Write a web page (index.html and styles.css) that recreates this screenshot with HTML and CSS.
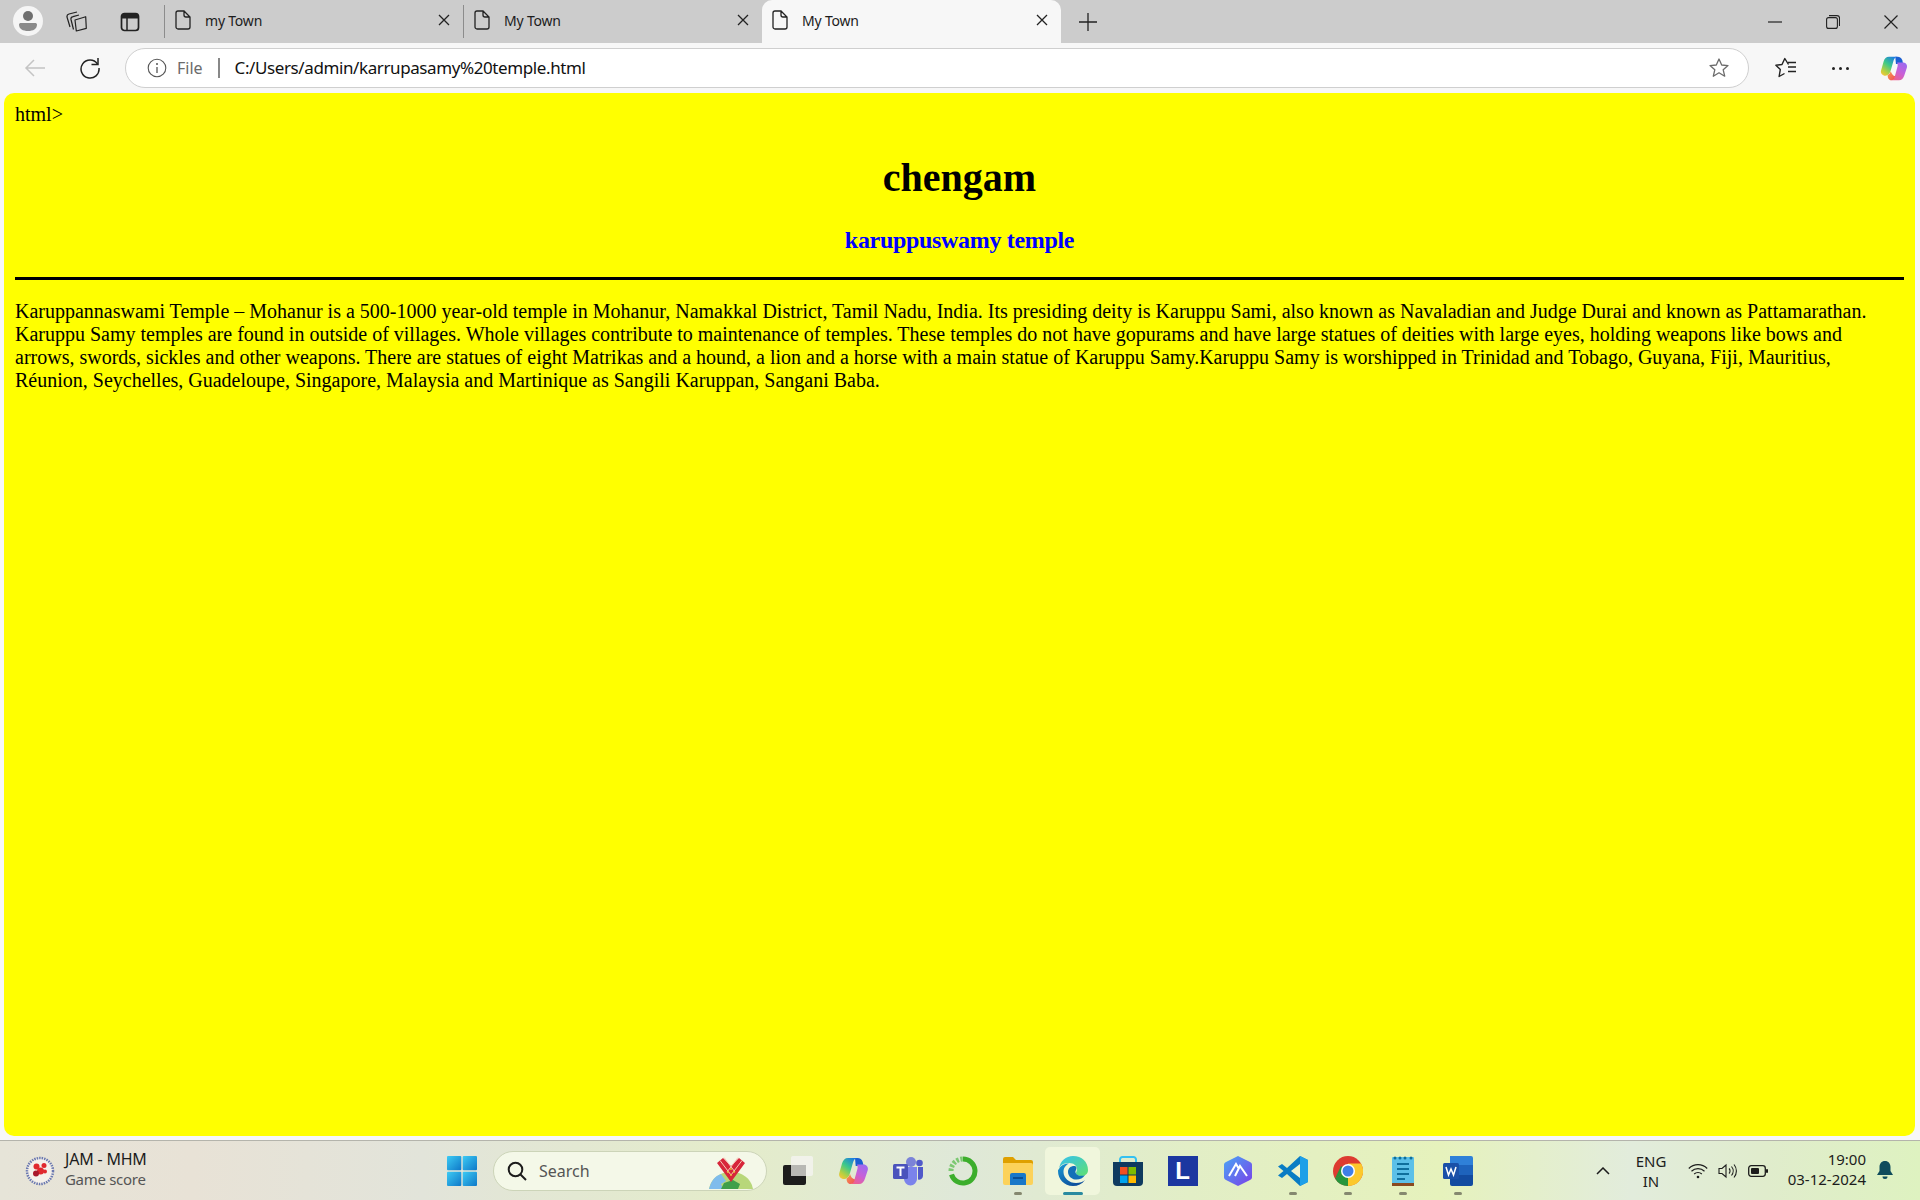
FILE: index.html
```html
<!DOCTYPE html>
<html lang="en">
<head>
  <meta charset="UTF-8">
  <title>My Town</title>
  <link rel="stylesheet" href="styles.css">
</head>
<body>

<svg class="sprite" width="0" height="0">
  <defs>
    <linearGradient id="copA" x1="0.8" y1="0" x2="0.15" y2="1">
      <stop offset="0" stop-color="#1a78e6"/><stop offset="0.45" stop-color="#3cc98a"/><stop offset="0.8" stop-color="#b8d040"/><stop offset="1" stop-color="#f6c63b"/>
    </linearGradient>
    <linearGradient id="copB" x1="0.8" y1="0" x2="0.2" y2="1">
      <stop offset="0" stop-color="#9a6cf0"/><stop offset="0.5" stop-color="#c860d8"/><stop offset="1" stop-color="#f0608a"/>
    </linearGradient>
    <linearGradient id="copC" x1="0" y1="0" x2="1" y2="1">
      <stop offset="0" stop-color="#f8a04a"/><stop offset="1" stop-color="#f04a5a"/>
    </linearGradient>
    <linearGradient id="edgeA" x1="0" y1="0" x2="1" y2="1">
      <stop offset="0" stop-color="#35c1f1"/><stop offset="1" stop-color="#5fe070"/>
    </linearGradient>
    <linearGradient id="edgeB" x1="0" y1="0" x2="0.6" y2="1">
      <stop offset="0" stop-color="#1a9ad6"/><stop offset="1" stop-color="#0c4f9c"/>
    </linearGradient>
    <linearGradient id="winG" x1="0" y1="0" x2="1" y2="1">
      <stop offset="0" stop-color="#3ccbf4"/><stop offset="1" stop-color="#0f78c8"/>
    </linearGradient>
    <linearGradient id="markG" x1="0" y1="0" x2="1" y2="1">
      <stop offset="0" stop-color="#4aa6f5"/><stop offset="1" stop-color="#7a3fe8"/>
    </linearGradient>
    <symbol id="file" viewBox="0 0 16 20">
      <path d="M1 3a2 2 0 0 1 2-2h6l6 6v10a2 2 0 0 1-2 2H3a2 2 0 0 1-2-2z M9 1v4a2 2 0 0 0 2 2h4" fill="none" stroke="#222" stroke-width="1.3"/>
    </symbol>
    <symbol id="cross" viewBox="0 0 12 12">
      <path d="M1 1l10 10M11 1L1 11" fill="none" stroke="#222" stroke-width="1.3"/>
    </symbol>
    <symbol id="copilot" viewBox="0 0 32 32">
      <path d="M18 3h2.500c2.500 0 4.500 1.500 5.200 4l1 4h-8z" fill="#1b5fd2"/>
      <path d="M21 9.500h5.500c3 0 5 2.500 4.300 5.500L28 23.500c-1 3.500-3 5.500-6 5.500h-9c2.500 0 3.700-2 4.500-4.500l3-11c.3-1.300 0-2.500-.5-4z" fill="url(#copB)"/>
      <path d="M11 3h9.500c-2.500 0-3.700 2-4.500 4.500L13 18c-1 3.500-3 6-6 6s-5.500-2.500-4.800-5.500L5 8.500C6 5 8 3 11 3z" fill="url(#copA)"/>
      <path d="M9.500 23.500c1.500-1 2.800-2.500 3.500-4.500.8 3 2.500 5 5 5.500-.8 2.500-2 4.500-4.500 4.500-2.800 0-3.800-2.500-4-5.500z" fill="url(#copC)"/>
    </symbol>
  </defs>
</svg>

<div class="tabstrip">
  <div class="avatar">
    <svg width="22" height="24" viewBox="0 0 22 24"><circle cx="11" cy="7" r="5" fill="#6f6f6f"/><path d="M2 15.500c0-1 1-1.500 2-1.500h14c1 0 2 .5 2 1.500C20 20 16 22 11 22S2 20 2 15.500z" fill="#8a8a8a"/></svg>
  </div>
  <div class="strip-icon collections">
    <svg width="22" height="22" viewBox="0 0 22 22" fill="none" stroke="#222" stroke-width="1.200" stroke-linejoin="round"><path d="M9 9l10.700-3.300.6 11.600L10.300 20z"/><path d="M13 4L7 5.600Q4.500 6.200 5 8.500L7.500 18.500"/><path d="M11 1L3 3Q.6 3.600 1 6L4 16"/></svg>
  </div>
  <div class="strip-icon vertical">
    <svg width="20" height="20" viewBox="0 0 20 20"><rect x="1.500" y="1.500" width="17" height="17" rx="3" fill="none" stroke="#222" stroke-width="1.700"/><path d="M1.500 4.500a3 3 0 0 1 3-3h11a3 3 0 0 1 3 3v2h-17z" fill="#222"/><path d="M7 6v12" stroke="#222" stroke-width="1.500"/></svg>
  </div>
  <div class="tab tab-first">
    <svg class="tab-file"><use href="#file"/></svg>
    <span class="tab-title">my Town</span>
    <svg class="tab-close"><use href="#cross"/></svg>
  </div>
  <div class="tab tab-second">
    <svg class="tab-file"><use href="#file"/></svg>
    <span class="tab-title">My Town</span>
    <svg class="tab-close"><use href="#cross"/></svg>
  </div>
  <div class="tab tab-active">
    <svg class="tab-file"><use href="#file"/></svg>
    <span class="tab-title">My Town</span>
    <svg class="tab-close"><use href="#cross"/></svg>
  </div>
  <div class="new-tab">
    <svg width="18" height="18" viewBox="0 0 18 18"><path d="M9 0v18M0 9h18" stroke="#222" stroke-width="1.300"/></svg>
  </div>
  <div class="window-controls">
    <svg width="14" height="14" viewBox="0 0 14 14"><path d="M0 7h14" stroke="#222" stroke-width="1.200"/></svg>
    <svg width="14" height="14" viewBox="0 0 14 14" fill="none" stroke="#222" stroke-width="1.100"><rect x=".6" y="2.600" width="10.800" height="10.800" rx="2"/><path d="M3 .6h8a2.500 2.500 0 0 1 2.500 2.500V11"/></svg>
    <svg width="14" height="14" viewBox="0 0 14 14"><path d="M.5.500l13 13M13.500.5l-13 13" stroke="#222" stroke-width="1.200"/></svg>
  </div>
</div>

<div class="toolbar">
  <div class="tool tool-back">
    <svg width="22" height="20" viewBox="0 0 22 20" fill="none" stroke="#c4c4c4" stroke-width="1.500"><path d="M21 10H2M10 2l-8 8 8 8"/></svg>
  </div>
  <div class="tool">
    <svg width="22" height="22" viewBox="0 0 22 22" fill="none" stroke="#222" stroke-width="1.500"><path d="M18.500 7A9 9 0 1 0 20 11"/><path d="M19 1v6.500h-6.500"/></svg>
  </div>
  <div class="address">
    <svg class="info" width="20" height="20" viewBox="0 0 20 20"><circle cx="10" cy="10" r="8.800" fill="none" stroke="#555" stroke-width="1.100"/><path d="M10 9v6" stroke="#555" stroke-width="1.300"/><circle cx="10" cy="6" r="1" fill="#555"/></svg>
    <span class="scheme">File</span>
    <span class="scheme-sep"></span>
    <span class="url">C:/Users/admin/karrupasamy%20temple.html</span>
    <svg class="star" width="22" height="22" viewBox="0 0 22 22"><path d="M11 2l2.700 6 6.300.6-4.800 4.200 1.500 6.400L11 15.800l-5.700 3.400 1.500-6.400L2 8.600 8.300 8z" fill="none" stroke="#6b6b6b" stroke-width="1.300" stroke-linejoin="round"/></svg>
  </div>
  <div class="tool tool-fav">
    <svg width="22" height="22" viewBox="0 0 22 22" fill="none" stroke="#222" stroke-width="1.400" stroke-linejoin="round"><path d="M13.500 7.500L9.800 1.500 7 7.500.9 8.300 5.300 12.600 4.100 19.500 9.500 16.500"/><path d="M13 5.500h8M13 10h8M13 14.500h8"/></svg>
  </div>
  <div class="tool tool-more">
    <span class="dot"></span><span class="dot"></span><span class="dot"></span>
  </div>
  <div class="tool tool-copilot">
    <svg width="29" height="29"><use href="#copilot"/></svg>
  </div>
</div>

<main class="page">
  <div class="stray">html&gt;</div>
  <h1>chengam</h1>
  <h2>karuppuswamy temple</h2>
  <hr>
  <p>Karuppannaswami Temple – Mohanur is a 500-1000 year-old temple in Mohanur, Namakkal District, Tamil Nadu, India. Its presiding deity is Karuppu Sami, also known as Navaladian and Judge Durai and known as Pattamarathan. Karuppu Samy temples are found in outside of villages. Whole villages contribute to maintenance of temples. These temples do not have gopurams and have large statues of deities with large eyes, holding weapons like bows and arrows, swords, sickles and other weapons. There are statues of eight Matrikas and a hound, a lion and a horse with a main statue of Karuppu Samy.Karuppu Samy is worshipped in Trinidad and Tobago, Guyana, Fiji, Mauritius, Réunion, Seychelles, Guadeloupe, Singapore, Malaysia and Martinique as Sangili Karuppan, Sangani Baba.</p>
</main>

<footer class="taskbar">
  <div class="widget">
    <svg width="30" height="30" viewBox="0 0 30 30">
      <circle cx="15" cy="15" r="13" fill="#f4f0ea" stroke="#6a78b0" stroke-width="2.500" stroke-dasharray="1.500 1"/>
      <g fill="#e0282e"><circle cx="11.500" cy="10.500" r="3"/><circle cx="19" cy="9.500" r="2.500"/><circle cx="15.500" cy="15" r="3.500"/><circle cx="20" cy="15.500" r="2"/></g>
      <circle cx="11" cy="17.500" r="3" fill="#a8182c"/>
    </svg>
    <div class="widget-text">
      <div class="widget-title">JAM - MHM</div>
      <div class="widget-sub">Game score</div>
    </div>
  </div>

  <div class="start">
    <svg width="30" height="30" viewBox="0 0 30 30" fill="url(#winG)"><rect width="14.300" height="14.300" rx="1"/><rect x="15.700" width="14.300" height="14.300" rx="1"/><rect y="15.700" width="14.300" height="14.300" rx="1"/><rect x="15.700" y="15.700" width="14.300" height="14.300" rx="1"/></svg>
  </div>

  <div class="search">
    <svg width="20" height="20" viewBox="0 0 20 20" fill="none" stroke="#1c1c1c" stroke-width="2"><circle cx="8.500" cy="8.500" r="6.800"/><path d="M13.500 13.500L19 19"/></svg>
    <span class="search-text">Search</span>
    <svg class="search-art" width="50" height="34" viewBox="0 0 50 34">
      <path d="M2 34C4 23 13 17 24 17s20 6 22 17z" fill="#b8d77a"/>
      <path d="M2 34C4 26 8 21 14 19l5 7-5 3 2 5z" fill="#7fbcec"/>
      <path d="M14 34l3-6 9-3 7 4-2 5z" fill="#3f9f4a"/>
      <path d="M10 8l6-5 8 8 8-8 6 5-14 19z" fill="#d7263a"/>
      <path d="M13 5.500L24 20M17 2.500L28 17M35 5.500L24 20M31 2.500L20 17" stroke="#f6c9b8" stroke-width="1"/>
      <g fill="#e8b83a"><circle cx="24" cy="14" r="1"/><circle cx="21" cy="17" r="1"/><circle cx="27" cy="17" r="1"/><circle cx="24" cy="20" r="1"/></g>
    </svg>
  </div>

  <div class="apps">
    <div class="app">
      <svg width="30" height="30" viewBox="0 0 30 30"><rect y="9" width="23" height="20" rx="2" fill="#1c1c1c"/><rect x="8" y="0" width="22" height="20" rx="2" fill="#f3f3ee" opacity=".85"/><rect x="8" y="9" width="15" height="11" fill="#b8b8b4"/></svg>
    </div>
    <div class="app">
      <svg width="32" height="32"><use href="#copilot"/></svg>
    </div>
    <div class="app">
      <svg width="30" height="30" viewBox="0 0 30 30"><circle cx="18" cy="6" r="5" fill="#7b83d8"/><circle cx="26.500" cy="7" r="3.300" fill="#5059c9"/><path d="M11 11h13v12a6.500 6.500 0 0 1-13 0z" fill="#7b83eb"/><path d="M25 11h5v9a4 4 0 0 1-5 3.500z" fill="#5059c9"/><rect y="8" width="15" height="15" rx="1.500" fill="#4b53bc"/><path d="M3.500 11.500h8M7.500 11.500v8.500" stroke="#fff" stroke-width="2"/></svg>
    </div>
    <div class="app">
      <svg width="30" height="30" viewBox="0 0 30 30" fill="none"><path d="M15 3a12 12 0 1 1-11.500 15.500" stroke="#3cae2c" stroke-width="5"/><path d="M3 15A12 12 0 0 1 15 3" stroke="#7cc872" stroke-width="5" stroke-dasharray="2.500 1.500"/></svg>
    </div>
    <div class="app running">
      <svg width="30" height="30" viewBox="0 0 30 30"><path d="M0 3a2 2 0 0 1 2-2h8l3 3h15a2 2 0 0 1 2 2v3H0z" fill="#dfa000"/><path d="M0 7h28a2 2 0 0 1 2 2v18a2 2 0 0 1-2 2H2a2 2 0 0 1-2-2z" fill="#fcd25a"/><path d="M7 19a2 2 0 0 1 2-2h12a2 2 0 0 1 2 2v10H7z" fill="#1a78c8"/><rect x="10" y="21" width="10" height="2" fill="#0b4f94"/></svg>
    </div>
    <div class="app running active">
      <svg width="30" height="30" viewBox="0 0 30 30"><path d="M1 13C2 5 8 0 15 0c9 0 15 6 15 14 0 4-3 6-7 6-3 0-5-1-5-3 0-1 1-2 1-4 0-3-3-6-8-6C6 7 2 9 1 13z" fill="url(#edgeA)"/><path d="M1 13C3 9 7 7.500 11 7.500c-4 2-5.500 5-5.500 8.500C5.500 22 11 27 18 27c4 0 7-1 9-3-3 4-7 6-12 6C6 30 0 23 0 15c0-1 .3-1.500 1-2z" fill="url(#edgeB)"/><path d="M10 16c0-4 3-6 6-6 2.500 0 3 2 2 4-.5 1-1 2 0 3.500 1.500 2.500 6 3 9 1.500-2 3.500-6 5-10 4.500-4-.5-7-4-7-7.500z" fill="#1270b8"/></svg>
    </div>
    <div class="app">
      <svg width="30" height="30" viewBox="0 0 30 30"><path d="M7 7V3.500A2.500 2.500 0 0 1 9.500 1h11A2.500 2.500 0 0 1 23 3.500V7" fill="none" stroke="#35c1f1" stroke-width="2"/><path d="M0 6h30v20a4 4 0 0 1-4 4H4a4 4 0 0 1-4-4z" fill="#0f3a5f"/><rect x="7" y="11" width="7.500" height="7.500" fill="#f25022"/><rect x="15.500" y="11" width="7.500" height="7.500" fill="#7fba00"/><rect x="7" y="19.500" width="7.500" height="7.500" fill="#00a4ef"/><rect x="15.500" y="19.500" width="7.500" height="7.500" fill="#ffb900"/></svg>
    </div>
    <div class="app">
      <div class="l-tile">L</div>
    </div>
    <div class="app">
      <svg width="28" height="30" viewBox="0 0 28 30"><path d="M14 0l12 6a3 3 0 0 1 2 3v12a3 3 0 0 1-2 3l-12 6-12-6a3 3 0 0 1-2-3V9a3 3 0 0 1 2-3z" fill="url(#markG)"/><path d="M5 20L12 8l3 5M11 20l5-10 7 10" fill="none" stroke="#fff" stroke-width="2"/></svg>
    </div>
    <div class="app running">
      <svg width="30" height="30" viewBox="0 0 30 30"><path d="M22 0l8 4v22l-8 4L9 18l-5 4-4-2.500L5.500 15 0 10.500 4 8l5 4z" fill="#0a7cc4"/><path d="M22 0l8 4v22l-8 4z" fill="#1ea0e8"/><path d="M22 8v14l-9-7z" fill="#eef4cf"/></svg>
    </div>
    <div class="app running">
      <svg width="30" height="30" viewBox="0 0 30 30"><circle cx="15" cy="15" r="15" fill="#dd3b30"/><path d="M15 15L2 22.500A15 15 0 0 0 15 30z" fill="#27963c"/><path d="M15 15l0 15A15 15 0 0 0 28 7.500H15z" fill="#fcc82c"/><path d="M15 15L2 22.500 8 10z" fill="#27963c"/><circle cx="15" cy="15" r="7" fill="#fff"/><circle cx="15" cy="15" r="5.500" fill="#3f7fe8"/></svg>
    </div>
    <div class="app running">
      <svg width="22" height="30" viewBox="0 0 22 30"><rect y="1" width="22" height="27" rx="1" fill="#5cc0e8"/><rect y="27" width="22" height="3" fill="#8a4a20"/><path d="M5 8h12M5 13h12M5 18h12M5 23h8" stroke="#0f6f9c" stroke-width="1.800"/><g fill="#0f6f9c"><circle cx="3" cy="2" r="1.500"/><circle cx="8" cy="2" r="1.500"/><circle cx="13" cy="2" r="1.500"/><circle cx="19" cy="2" r="1.500"/></g></svg>
    </div>
    <div class="app running">
      <svg width="30" height="30" viewBox="0 0 30 30"><path d="M7 0h21a2 2 0 0 1 2 2v7H7z" fill="#2f80d8"/><rect x="7" y="9" width="23" height="10" fill="#1e63bc"/><path d="M7 19h23v9a2 2 0 0 1-2 2H9a2 2 0 0 1-2-2z" fill="#124ba0"/><rect y="7" width="16" height="16" rx="1.500" fill="#1a50a8"/><path d="M3 11l2.500 8 2.500-6 2.500 6 2.500-8" fill="none" stroke="#fff" stroke-width="1.500"/></svg>
    </div>
  </div>

  <div class="tray">
    <svg class="chevron" width="14" height="8" viewBox="0 0 14 8"><path d="M1 7l6-6 6 6" fill="none" stroke="#1c1c1c" stroke-width="1.500"/></svg>
    <div class="lang">ENG<br>IN</div>
    <svg class="wifi" width="20" height="16" viewBox="0 0 20 16" fill="none" stroke="#1c1c1c" stroke-width="1.200"><path d="M.8 5.500a13 13 0 0 1 18.400 0M3.500 8.300a9.300 9.300 0 0 1 13 0M6.200 11a5.500 5.500 0 0 1 7.600 0"/><circle cx="10" cy="14" r="1.300" fill="#1c1c1c" stroke="none"/></svg>
    <svg class="volume" width="20" height="16" viewBox="0 0 20 16" fill="none" stroke="#1c1c1c" stroke-width="1.100"><path d="M1 5.500h3L8 2v12l-4-3.500H1z"/><path d="M11 5.500a3.500 3.500 0 0 1 0 5M13.500 3.500a7 7 0 0 1 0 9M16 1.500a10 10 0 0 1 0 13"/></svg>
    <svg class="battery" width="20" height="12" viewBox="0 0 20 12"><rect x=".7" y=".7" width="16.600" height="10.600" rx="2.500" fill="none" stroke="#1c1c1c" stroke-width="1.300"/><rect x="3" y="3" width="8" height="6" rx="1" fill="#1c1c1c"/><rect x="18" y="4" width="2" height="4" rx="1" fill="#1c1c1c"/></svg>
    <div class="clock">19:00<br>03-12-2024</div>
    <svg class="bell" width="16" height="19" viewBox="0 0 16 19" fill="#0f4c5c"><path d="M8 0c3.500 0 5.500 2.700 5.500 6v4l2.500 4H0l2.500-4V6C2.500 2.700 4.500 0 8 0z"/><path d="M5.500 15.500h5a2.500 2.500 0 0 1-5 0z"/></svg>
  </div>
</footer>

</body>
</html>
```

FILE: styles.css
```css
body {
  margin: 0;
  height: 1200px;
  overflow: hidden;
  display: flex;
  flex-direction: column;
  background: #f7f7f7;
  font-family: "Noto Sans", sans-serif;
  color: #1c1c1c;
}
.sprite {
  display: block;
  flex: none;
}

/* tab strip */
.tabstrip {
  height: 43px;
  flex: none;
  display: flex;
  background: #cccccc;
}
.avatar {
  width: 30px;
  height: 30px;
  margin: 6px 0 0 13px;
  border-radius: 50%;
  background: #f5f5f5;
  display: flex;
  align-items: center;
  justify-content: center;
}
.strip-icon {
  height: 43px;
  display: flex;
  align-items: center;
}
.collections {
  margin-left: 23px;
}
.vertical {
  margin-left: 32px;
}
.tab {
  width: 299px;
  height: 43px;
  flex: none;
  display: flex;
  align-items: center;
  font-size: 14px;
  letter-spacing: -0.2px;
  box-sizing: border-box;
  padding-left: 10px;
  padding-bottom: 3px;
}
.tab-first {
  margin-left: 24px;
  border-left: 1px solid #8c8c8c;
  height: 33px;
  margin-top: 5px;
}
.tab-second {
  border-left: 1px solid #8c8c8c;
  height: 33px;
  margin-top: 5px;
}
.tab-active {
  height: 48px;
  background: #f7f7f7;
  border-radius: 10px 10px 0 0;
}
.tab-file {
  width: 16px;
  height: 20px;
  flex: none;
}
.tab-title {
  margin-left: 14px;
  flex: 1;
}
.tab-close {
  width: 12px;
  height: 12px;
  flex: none;
  margin-right: 13px;
}
.tab-active .tab-file,
.tab-active .tab-title,
.tab-active .tab-close {
  margin-bottom: 5px;
}
.new-tab {
  margin-left: 18px;
  height: 43px;
  display: flex;
  align-items: center;
}
.window-controls {
  margin-left: auto;
  display: flex;
  align-items: center;
  height: 43px;
  gap: 44px;
  padding-right: 22px;
}

/* address row */
.toolbar {
  height: 50px;
  flex: none;
  display: flex;
  align-items: center;
  padding-left: 10px;
}
.tool {
  width: 50px;
  height: 40px;
  flex: none;
  display: flex;
  align-items: center;
  justify-content: center;
}
.tool-back {
  margin-right: 5px;
}
.address {
  width: 1624px;
  height: 40px;
  margin-left: 10px;
  box-sizing: border-box;
  flex: none;
  display: flex;
  align-items: center;
  background: #ffffff;
  border: 1px solid #cfcfcf;
  border-radius: 20px;
  padding-left: 21px;
  padding-bottom: 1px;
}
.scheme {
  margin-left: 10px;
  font-size: 16px;
  color: #6b6b6b;
}
.scheme-sep {
  width: 2px;
  height: 20px;
  background: #888888;
  margin: 0 15px;
}
.url {
  font-size: 17px;
  color: #111111;
  letter-spacing: -0.4px;
}
.star {
  margin-left: auto;
  margin-right: 18px;
}
.tool-fav {
  width: 45px;
  margin-left: 14px;
}
.tool-more {
  width: 45px;
  margin-left: 10px;
  gap: 4px;
}
.dot {
  width: 3px;
  height: 3px;
  border-radius: 50%;
  background: #222222;
}
.tool-copilot {
  width: 46px;
  margin-left: 7px;
}

/* the page itself */
.page {
  height: 1043px;
  flex: none;
  margin: 0 5px 0 4px;
  padding: 10px 11px;
  box-sizing: border-box;
  background: #ffff00;
  border-radius: 10px;
  font-family: "Liberation Serif", serif;
  font-size: 20px;
  color: #000000;
}
.stray {
  line-height: 23px;
}
h1 {
  font-size: 40px;
  text-align: center;
  margin: 29px 0 26px;
  line-height: 46px;
}
h2 {
  font-size: 24px;
  text-align: center;
  color: #0000ff;
  margin: 0 0 23px;
  line-height: 27px;
  letter-spacing: -0.32px;
}
hr {
  height: 3px;
  border: 0;
  background: #000000;
  margin: 0 0 20px;
}
p {
  margin: 0;
  line-height: 23px;
}

/* taskbar */
.taskbar {
  height: 60px;
  margin-top: 4px;
  box-sizing: border-box;
  border-top: 1px solid #b4b4ac;
  flex: none;
  display: flex;
  align-items: center;
  background: linear-gradient(90deg, #e6e4d8 0%, #e8e2d6 10%, #e2e4da 22%, #e4ecca 38%, #dfe8d8 50%, #e2eec6 62%, #e6f2bc 75%, #e2ecdc 85%, #e0eccc 92%, #def2c0 100%);
}
.widget {
  width: 447px;
  flex: none;
  box-sizing: border-box;
  padding-left: 25px;
  padding-bottom: 4px;
  display: flex;
  align-items: center;
  gap: 10px;
}
.widget-title {
  font-size: 16px;
  line-height: 20px;
  color: #1c1c1c;
  letter-spacing: -0.2px;
}
.widget-sub {
  font-size: 15px;
  line-height: 20px;
  color: #555555;
  letter-spacing: -0.3px;
}
.widget svg {
  margin-top: 4px;
}
.start {
  width: 46px;
  flex: none;
  display: flex;
}
.search {
  width: 274px;
  height: 40px;
  flex: none;
  box-sizing: border-box;
  display: flex;
  align-items: center;
  padding-left: 13px;
  background: #f4f8e8;
  border: 1px solid #ccd4b8;
  border-radius: 20px;
}
.search-text {
  margin-left: 12px;
  font-size: 16px;
  color: #555555;
}
.search-art {
  margin-left: auto;
  margin-right: 9px;
  margin-top: 2px;
}
.apps {
  display: flex;
  margin-left: 3px;
  flex: none;
}
.app {
  width: 55px;
  height: 48px;
  flex: none;
  display: flex;
  align-items: center;
  justify-content: center;
  position: relative;
  box-sizing: border-box;
}
.app.running::after {
  content: "";
  position: absolute;
  left: 24px;
  bottom: 0;
  width: 8px;
  height: 3px;
  border-radius: 2px;
  background: #85886f;
}
.app.active {
  background: #f0f6dc;
  border-radius: 5px;
}
.app.active::after {
  left: 18px;
  width: 20px;
  background: #2a8aa0;
}
.l-tile {
  width: 30px;
  height: 30px;
  background: #1c37a0;
  color: #ffffff;
  font-family: "Liberation Sans", sans-serif;
  font-weight: bold;
  font-size: 24px;
  line-height: 30px;
  text-align: center;
}
.tray {
  margin-left: auto;
  display: flex;
  align-items: center;
  padding-right: 27px;
}
.lang {
  margin-left: 21px;
  width: 40px;
  font-size: 15px;
  line-height: 20px;
  text-align: center;
}
.wifi {
  margin-left: 17px;
}
.volume {
  margin-left: 10px;
}
.battery {
  margin-left: 10px;
}
.clock {
  margin-left: 18px;
  width: 80px;
  padding-bottom: 3px;
  font-size: 15px;
  line-height: 20px;
  text-align: right;
  white-space: nowrap;
}
.bell {
  margin-left: 11px;
}
```
